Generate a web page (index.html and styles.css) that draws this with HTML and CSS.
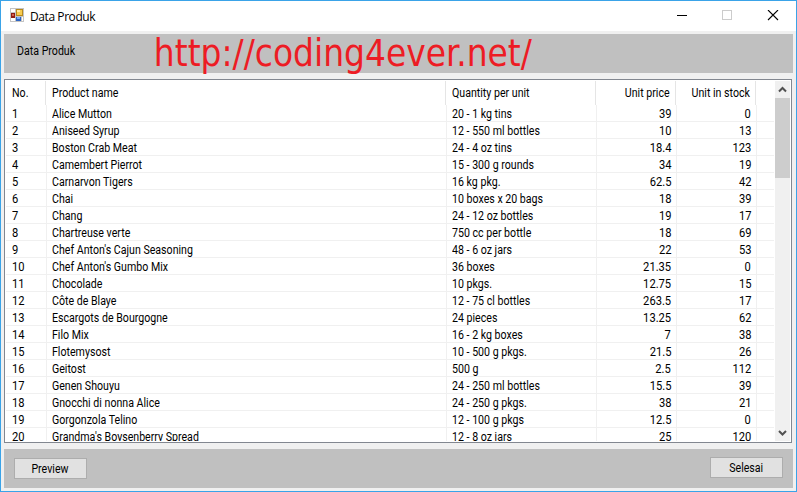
FILE: index.html
```html
<!DOCTYPE html>
<html lang="en">
<head>
<meta charset="utf-8">
<title>Data Produk</title>
<link rel="stylesheet" href="styles.css">
</head>
<body>
<div class="window">
  <header class="titlebar">
    <svg class="app-icon" width="14" height="14" viewBox="0 0 14 14" shape-rendering="crispEdges">
      <path fill="#c4c4c4" d="M0 0h14v14H0z"/>
      <path fill="#fff" d="M1 1h4v3H1zM1 10h4v3H1zM12 9h1v4h-1z"/>
      <path fill="#b88a1c" d="M6 1h7v7H6z"/><path fill="#f8cc50" d="M7 2h5v5H7z"/><path fill="#ffe9a0" d="M7 2h3v2H7z"/>
      <path fill="#8e1c14" d="M1 5h4v5H1z"/><path fill="#d4614e" d="M2 6h2v2H2z"/>
      <path fill="#2c64c4" d="M6 9h5v4H6z"/><path fill="#7aacf4" d="M7 9h3v2H7z"/>
    </svg>
    <span class="title">Data Produk</span>
    <svg class="controls" width="104" height="12" viewBox="0 0 104 12">
      <path d="M0 5.5h10" stroke="#000" fill="none"/>
      <rect x="45.5" y=".5" width="9" height="9" stroke="#ccc" fill="none"/>
      <path d="M91 0l10 10M101 0L91 10" stroke="#000" stroke-width="1.1" fill="none"/>
    </svg>
  </header>
  <section class="panel top"><span class="caption"><b>Data Produk</b></span><span class="url">http://coding4ever.net/</span></section>
  <main class="list">
    <div class="content">
      <div class="row head"><span><b>No.</b></span><span><b>Product name</b></span><span><b>Quantity per unit</b></span><span><b>Unit price</b></span><span><b>Unit in stock</b></span></div>
      <div id="rows"></div>
    </div>
    <div class="scrollbar">
      <svg width="15" height="17" viewBox="0 0 15 17"><path d="M4 10.5l3.5-3.5 3.5 3.5" fill="none" stroke="#505050" stroke-width="2"/></svg>
      <div class="thumb"></div>
      <svg class="down" width="15" height="17" viewBox="0 0 15 17"><path d="M4 7l3.5 3.5L11 7" fill="none" stroke="#505050" stroke-width="2"/></svg>
    </div>
  </main>
  <footer class="panel bottom"><button class="preview"><b>Preview</b></button><button class="close"><b>Selesai</b></button></footer>
</div>
<script src="app.js"></script>
</body>
</html>
```
FILE: styles.css
```css
* { box-sizing: border-box; }
body { margin: 0; font: 12px/17px Roboto, "Liberation Sans", sans-serif; color: #000; overflow: hidden; }
b { display: inline-block; font-weight: 400; transform: scaleX(.885); transform-origin: left; }
b.number { transform: scaleX(.93); }
.window { width: 797px; height: 492px; border: 1px solid #3aa3e8; background: #f0f0f0; display: flex; flex-direction: column; }
.titlebar { height: 30px; flex: none; background: #fff; display: flex; align-items: center; padding: 0 14px 0 9px; }
.title { font-family: "Open Sans", sans-serif; font-size: 12px; letter-spacing: -.42px; margin-left: 6px; }
.app-icon { position: relative; top: -1px; }
.controls { margin-left: auto; margin-right: 1px; }
.panel { background: #c0c0c0; height: 39px; flex: none; margin: 0 3px; display: flex; }
.top { margin-top: 3px; }
.caption { width: 137px; padding: 9px 0 0 13px; flex: none; }
.url { font: 37px/40px "DejaVu Sans Condensed", "DejaVu Sans", sans-serif; font-stretch: condensed; color: #ed1c24; padding-left: 13px; white-space: nowrap; transform: scaleX(.99); transform-origin: left; }
.list { margin: 6px 4px 6px 3px; height: 364px; flex: none; background: #fff; border: 1px solid #828790; padding: 1px; display: flex; overflow: hidden; }
.content { width: 769px; overflow: hidden; height: 360px; }
.row { display: grid; grid-template-columns: 41px 400px 150px 80px 80px 1fr; height: 17px; border-bottom: 1px solid #f0f0f0; margin-right: 1px; white-space: pre; }
.row span { border-right: 1px solid #f0f0f0; padding: 1px 5px 0 5px; line-height: 17px; }
.row span:first-child { padding-left: 6px; }
.row span:nth-child(n+4) { text-align: right; }
.row span:nth-child(n+4) b { transform-origin: right; }
.row.head { height: 24px; border: 0; grid-template-columns: 40px 400px 150px 80px 80px 1fr; }
.row.head span { border-color: #e5e5e5; padding-top: 4px; padding-left: 6px; padding-right: 5px; }
.scrollbar { width: 15px; display: flex; flex-direction: column; background: #f0f0f0; }
.thumb { height: 80px; background: #cdcdcd; }
.down { margin-top: auto; }
button { font: inherit; height: 21px; width: 73px; background: #e1e1e1; border: 1px solid #adadad; padding: 0; color: #000; }
button b { transform-origin: center; }
.bottom { justify-content: space-between; padding: 0 10px; }
.preview { margin-top: 9px; padding: 1px 2px 0 0; }
.close { margin-top: 8px; padding-top: 1px; }
```
FILE: app.js
```js
const products = [
  ["Alice Mutton", "20 - 1 kg tins", "39", "0"],
  ["Aniseed Syrup", "12 - 550 ml bottles", "10", "13"],
  ["Boston Crab Meat", "24 - 4 oz tins", "18.4", "123"],
  ["Camembert Pierrot", "15 - 300 g rounds", "34", "19"],
  ["Carnarvon Tigers", "16 kg pkg.", "62.5", "42"],
  ["Chai", "10 boxes x 20 bags", "18", "39"],
  ["Chang", "24 - 12 oz bottles", "19", "17"],
  ["Chartreuse verte", "750 cc per bottle", "18", "69"],
  ["Chef Anton's Cajun Seasoning", "48 - 6 oz jars", "22", "53"],
  ["Chef Anton's Gumbo Mix", "36 boxes", "21.35", "0"],
  ["Chocolade", "10 pkgs.", "12.75", "15"],
  ["Côte de Blaye", "12 - 75 cl bottles", "263.5", "17"],
  ["Escargots de Bourgogne", "24 pieces", "13.25", "62"],
  ["Filo Mix", "16 - 2 kg boxes", "7", "38"],
  ["Flotemysost", "10 - 500 g pkgs.", "21.5", "26"],
  ["Geitost", "500 g", "2.5", "112"],
  ["Genen Shouyu", "24 - 250 ml bottles", "15.5", "39"],
  ["Gnocchi di nonna Alice", "24 - 250 g pkgs.", "38", "21"],
  ["Gorgonzola Telino", "12 - 100 g pkgs", "12.5", "0"],
  ["Grandma's Boysenberry Spread", "12 - 8 oz jars", "25", "120"]
];
const rows = document.getElementById("rows");
products.forEach((product, i) => {
  const row = document.createElement("div");
  row.className = "row";
  [String(i + 1), ...product].forEach((text, column) => {
    const cell = document.createElement("span");
    const label = document.createElement("b");
    label.textContent = text;
    if (column !== 1 && column !== 2) label.className = "number";
    cell.append(label);
    row.append(cell);
  });
  rows.append(row);
});
```
